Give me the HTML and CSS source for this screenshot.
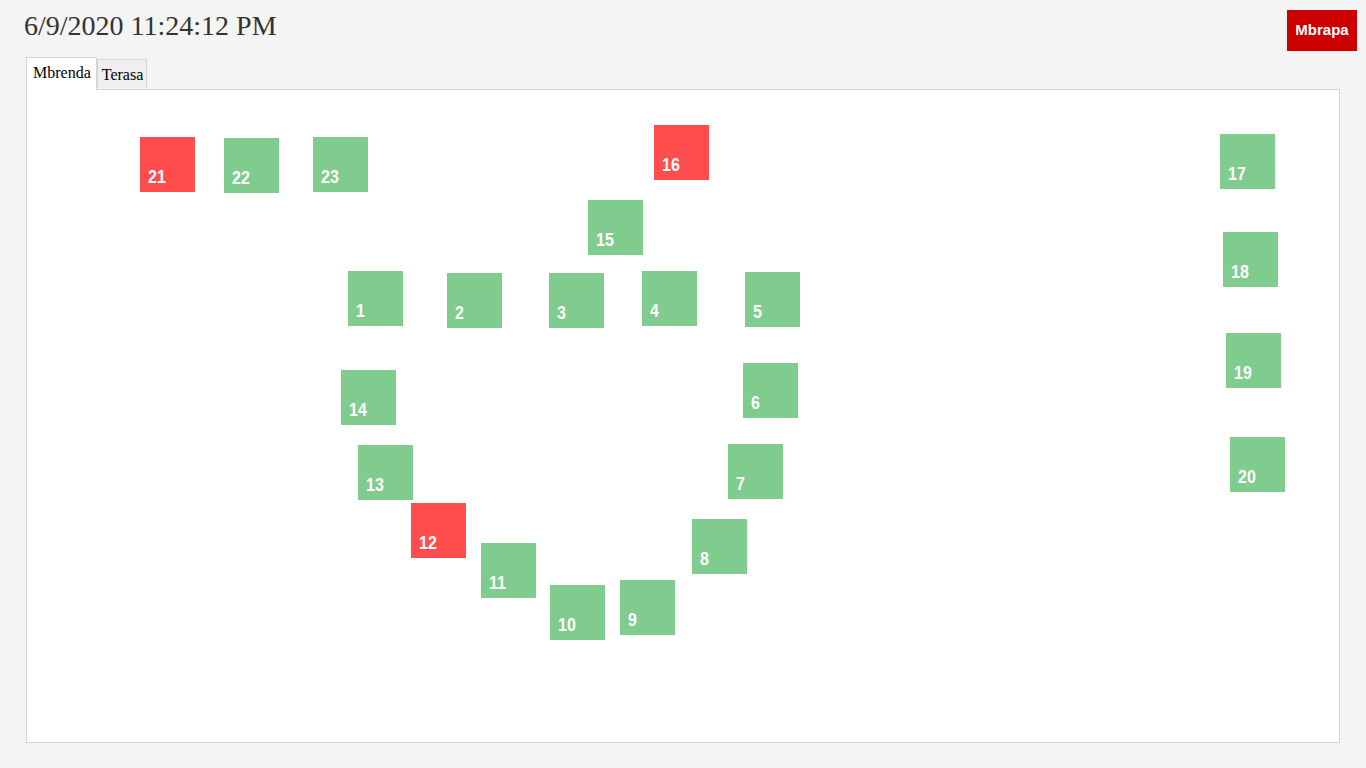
FILE: index.html
```html
<!DOCTYPE html>
<html>
<head>
<meta charset="utf-8">
<link rel="stylesheet" href="styles.css">
</head>
<body>
<header class="top">
  <div class="clock">6/9/2020 11:24:12 PM</div>
  <button class="back">Mbrapa</button>
</header>
<div class="tabs">
  <div class="tab active">Mbrenda</div>
  <div class="tab">Terasa</div>
</div>
<main class="floor">
  <div class="tbl busy" style="left:113px;top:47px"><span>21</span></div>
  <div class="tbl" style="left:197px;top:48px"><span>22</span></div>
  <div class="tbl" style="left:286px;top:47px"><span>23</span></div>
  <div class="tbl busy" style="left:627px;top:35px"><span>16</span></div>
  <div class="tbl" style="left:1193px;top:44px"><span>17</span></div>
  <div class="tbl" style="left:561px;top:110px"><span>15</span></div>
  <div class="tbl" style="left:1196px;top:142px"><span>18</span></div>
  <div class="tbl" style="left:321px;top:181px"><span>1</span></div>
  <div class="tbl" style="left:420px;top:183px"><span>2</span></div>
  <div class="tbl" style="left:522px;top:183px"><span>3</span></div>
  <div class="tbl" style="left:615px;top:181px"><span>4</span></div>
  <div class="tbl" style="left:718px;top:182px"><span>5</span></div>
  <div class="tbl" style="left:1199px;top:243px"><span>19</span></div>
  <div class="tbl" style="left:314px;top:280px"><span>14</span></div>
  <div class="tbl" style="left:716px;top:273px"><span>6</span></div>
  <div class="tbl" style="left:1203px;top:347px"><span>20</span></div>
  <div class="tbl" style="left:331px;top:355px"><span>13</span></div>
  <div class="tbl" style="left:701px;top:354px"><span>7</span></div>
  <div class="tbl busy" style="left:384px;top:413px"><span>12</span></div>
  <div class="tbl" style="left:665px;top:429px"><span>8</span></div>
  <div class="tbl" style="left:454px;top:453px"><span>11</span></div>
  <div class="tbl" style="left:593px;top:490px"><span>9</span></div>
  <div class="tbl" style="left:523px;top:495px"><span>10</span></div>
</main>
</body>
</html>
```
FILE: styles.css
```css
html, body {
  margin: 0;
  padding: 0;
  background: #f4f4f4;
}
body {
  width: 1366px;
  height: 768px;
  overflow: hidden;
  font-family: "Liberation Serif", "Times New Roman", serif;
}
.top {
  display: flex;
  justify-content: space-between;
  align-items: flex-start;
  padding: 10px 9px 0 24px;
  height: 47px;
}
.clock {
  font-size: 28px;
  color: #333;
  line-height: 32px;
  margin-top: 0;
}
.back {
  background: #cc0000;
  color: #fff;
  border: none;
  font-family: "Liberation Sans", Arial, sans-serif;
  font-weight: bold;
  font-size: 15px;
  width: 70px;
  height: 41px;
  padding: 0 0 2px;
}
.tabs {
  display: flex;
  align-items: flex-end;
  margin-left: 26px;
  height: 32px;
  position: relative;
  z-index: 1;
}
.tab {
  font-size: 16px;
  color: #000;
  border: 1px solid #d4d4d4;
  border-bottom: none;
  background: #efefef;
  height: 29px;
  line-height: 30px;
  padding: 0 3px 0 4px;
  box-sizing: border-box;
  margin-bottom: 1px;
}
.tab.active {
  background: #fff;
  height: 33px;
  line-height: 30px;
  padding: 0 5px 0 6px;
  margin-bottom: -1px;
}
.floor {
  position: relative;
  margin-left: 26px;
  width: 1314px;
  height: 654px;
  box-sizing: border-box;
  background: #fff;
  border: 1px solid #d4d4d4;
}
.tbl {
  position: absolute;
  width: 55px;
  height: 55px;
  background: #80cc8f;
  color: #fff;
  font-family: "Liberation Sans", Arial, sans-serif;
  font-weight: bold;
  font-size: 19px;
  line-height: 18px;
  box-sizing: border-box;
  padding: 0 0 6px 8px;
  display: flex;
  align-items: flex-end;
}
.tbl span {
  display: inline-block;
  transform: scaleX(0.84);
  transform-origin: left bottom;
}
.tbl.busy {
  background: #ff4d4d;
}
```
